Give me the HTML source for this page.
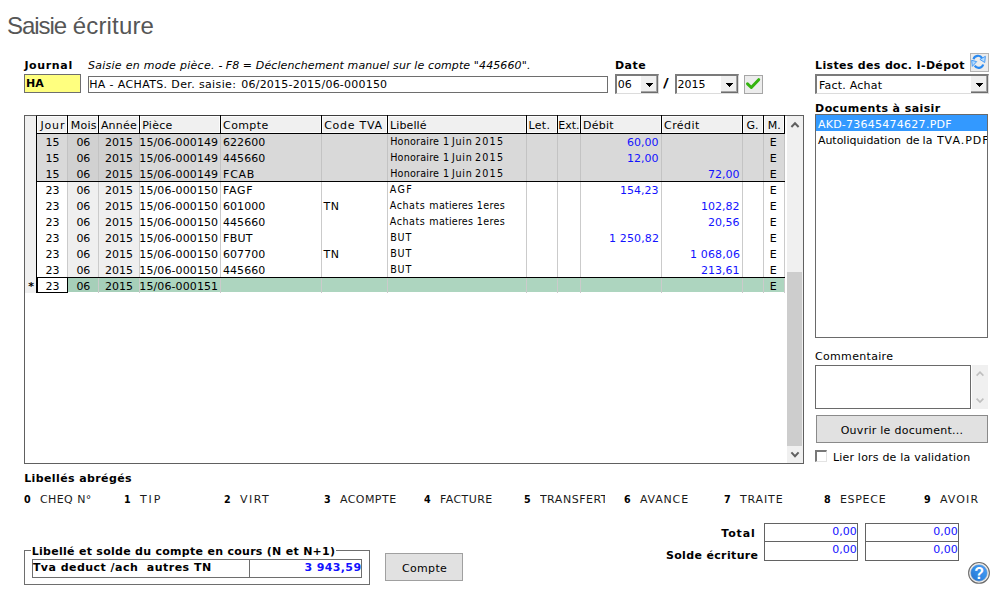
<!DOCTYPE html>
<html lang="fr"><head><meta charset="utf-8"><title>Saisie écriture</title>
<style>
html,body{margin:0;padding:0}
body{width:1000px;height:612px;position:relative;overflow:hidden;background:#fff;font-family:"DejaVu Sans","Liberation Sans",sans-serif;font-size:11px}
body>div,body>svg,body>span{position:absolute;box-sizing:border-box}
.t{white-space:pre;line-height:20px;height:20px}
.b{font-weight:bold}.i{font-style:italic}
.sel{background:#fff;border:solid;border-width:2px 1px 1px 2px;border-color:#7b7b7b #dcdcdc #dcdcdc #7b7b7b}
.sb{position:absolute;right:0;top:0;width:17px;height:17px;box-sizing:border-box;background:#f0f0f0;border:solid #6d6d6d;border-width:0 1px 1px 0;box-shadow:inset -1px -1px 0 #a5a5a5}
.sb svg{position:absolute;left:5px;top:7px}
.ckb{background:#ececec;border:1px solid #a6a6a6}
.ckb svg{position:absolute;left:0;top:0}
</style></head><body>
<div style="left:24px;top:74px;width:57px;height:19px;background:#ffff7f;border:1px solid #6e6e6e"></div>
<div style="left:88px;top:76px;width:520px;height:17px;background:#fff;border:1px solid #6e6e6e"></div>
<div class="sel" style="left:615px;top:74px;width:44px;height:20px"><div class="sb"><svg width="7" height="4" viewBox="0 0 7 4" shape-rendering="crispEdges"><path d="M0 0h7v1h-1v1h-1v1h-1v1h-1v-1h-1v-1h-1v-1h-1z"/></svg></div></div>
<div class="sel" style="left:675px;top:74px;width:64px;height:20px"><div class="sb"><svg width="7" height="4" viewBox="0 0 7 4" shape-rendering="crispEdges"><path d="M0 0h7v1h-1v1h-1v1h-1v1h-1v-1h-1v-1h-1v-1h-1z"/></svg></div></div>
<div class="sel" style="left:815px;top:74px;width:174px;height:20px"><div class="sb"><svg width="7" height="4" viewBox="0 0 7 4" shape-rendering="crispEdges"><path d="M0 0h7v1h-1v1h-1v1h-1v1h-1v-1h-1v-1h-1v-1h-1z"/></svg></div></div>
<div class="ckb" style="left:744px;top:75px;width:19px;height:19px"><svg width="17" height="17" viewBox="0 0 17 17"><path d="M2.5 7.9 L6.3 11.5 L13.7 3.7" fill="none" stroke="#35b410" stroke-width="3" stroke-linecap="round" stroke-linejoin="round"/></svg></div>
<div class="ckb" style="left:970px;top:53px;width:19px;height:19px;border-color:#b4b4b4"><svg width="17" height="17" viewBox="0 0 17 17"><path d="M2.5 5.3 A4.7 4.7 0 0 1 11.1 4.1" fill="none" stroke="#2b8af0" stroke-width="2.2"/><path d="M8.9 5.4 L14.4 2.3 L13.7 8.5 Z" fill="#b4dbff" stroke="#3a94f4" stroke-width="0.9" stroke-linejoin="round"/><path d="M12.2 10.5 A4.7 4.7 0 0 1 3.7 11.7" fill="none" stroke="#2b8af0" stroke-width="2.2"/><path d="M5.7 7.6 L0.6 6.3 L1.3 12.4 Z" fill="#b4dbff" stroke="#3a94f4" stroke-width="0.9" stroke-linejoin="round"/></svg></div>
<div style="left:24px;top:115px;width:780px;height:349px;background:#fff;border:1px solid #606060"></div>
<div style="left:25px;top:116px;width:11px;height:177px;background:#f0f0f0"></div>
<div style="left:37px;top:116px;width:30px;height:17px;background:#f0f0f0;box-shadow:inset 0 0 0 1px #fcfcfc"></div>
<div style="left:68px;top:116px;width:30px;height:17px;background:#f0f0f0;box-shadow:inset 0 0 0 1px #fcfcfc"></div>
<div style="left:99px;top:116px;width:40px;height:17px;background:#f0f0f0;box-shadow:inset 0 0 0 1px #fcfcfc"></div>
<div style="left:140px;top:116px;width:80px;height:17px;background:#f0f0f0;box-shadow:inset 0 0 0 1px #fcfcfc"></div>
<div style="left:221px;top:116px;width:100px;height:17px;background:#f0f0f0;box-shadow:inset 0 0 0 1px #fcfcfc"></div>
<div style="left:322px;top:116px;width:65px;height:17px;background:#f0f0f0;box-shadow:inset 0 0 0 1px #fcfcfc"></div>
<div style="left:388px;top:116px;width:138px;height:17px;background:#f0f0f0;box-shadow:inset 0 0 0 1px #fcfcfc"></div>
<div style="left:527px;top:116px;width:30px;height:17px;background:#f0f0f0;box-shadow:inset 0 0 0 1px #fcfcfc"></div>
<div style="left:558px;top:116px;width:22px;height:17px;background:#f0f0f0;box-shadow:inset 0 0 0 1px #fcfcfc"></div>
<div style="left:581px;top:116px;width:80px;height:17px;background:#f0f0f0;box-shadow:inset 0 0 0 1px #fcfcfc"></div>
<div style="left:662px;top:116px;width:80px;height:17px;background:#f0f0f0;box-shadow:inset 0 0 0 1px #fcfcfc"></div>
<div style="left:743px;top:116px;width:20px;height:17px;background:#f0f0f0;box-shadow:inset 0 0 0 1px #fcfcfc"></div>
<div style="left:764px;top:116px;width:20px;height:17px;background:#f0f0f0;box-shadow:inset 0 0 0 1px #fcfcfc"></div>
<div style="left:37px;top:134px;width:30px;height:47px;background:#d9d9d9"></div>
<div style="left:68px;top:134px;width:71px;height:47px;background:#d1d1d1"></div>
<div style="left:140px;top:134px;width:644px;height:47px;background:#d9d9d9"></div>
<div style="left:37px;top:182px;width:30px;height:95px;background:#fff"></div>
<div style="left:68px;top:182px;width:71px;height:95px;background:#efefef"></div>
<div style="left:140px;top:182px;width:644px;height:95px;background:#fff"></div>
<div style="left:37px;top:278px;width:30px;height:14px;background:#fff"></div>
<div style="left:68px;top:278px;width:71px;height:14px;background:#a6cfb9"></div>
<div style="left:140px;top:278px;width:644px;height:14px;background:#add5bf"></div>
<div style="left:67px;top:134px;width:1px;height:47px;background:#c3c3c3"></div>
<div style="left:67px;top:182px;width:1px;height:111px;background:#cbcbcb"></div>
<div style="left:98px;top:134px;width:1px;height:47px;background:#c3c3c3"></div>
<div style="left:98px;top:182px;width:1px;height:111px;background:#cbcbcb"></div>
<div style="left:139px;top:134px;width:1px;height:47px;background:#c3c3c3"></div>
<div style="left:139px;top:182px;width:1px;height:111px;background:#cbcbcb"></div>
<div style="left:220px;top:134px;width:1px;height:47px;background:#c3c3c3"></div>
<div style="left:220px;top:182px;width:1px;height:111px;background:#cbcbcb"></div>
<div style="left:321px;top:134px;width:1px;height:47px;background:#c3c3c3"></div>
<div style="left:321px;top:182px;width:1px;height:111px;background:#cbcbcb"></div>
<div style="left:387px;top:134px;width:1px;height:47px;background:#c3c3c3"></div>
<div style="left:387px;top:182px;width:1px;height:111px;background:#cbcbcb"></div>
<div style="left:526px;top:134px;width:1px;height:47px;background:#c3c3c3"></div>
<div style="left:526px;top:182px;width:1px;height:111px;background:#cbcbcb"></div>
<div style="left:557px;top:134px;width:1px;height:47px;background:#c3c3c3"></div>
<div style="left:557px;top:182px;width:1px;height:111px;background:#cbcbcb"></div>
<div style="left:580px;top:134px;width:1px;height:47px;background:#c3c3c3"></div>
<div style="left:580px;top:182px;width:1px;height:111px;background:#cbcbcb"></div>
<div style="left:661px;top:134px;width:1px;height:47px;background:#c3c3c3"></div>
<div style="left:661px;top:182px;width:1px;height:111px;background:#cbcbcb"></div>
<div style="left:742px;top:134px;width:1px;height:47px;background:#c3c3c3"></div>
<div style="left:742px;top:182px;width:1px;height:111px;background:#cbcbcb"></div>
<div style="left:763px;top:134px;width:1px;height:47px;background:#c3c3c3"></div>
<div style="left:763px;top:182px;width:1px;height:111px;background:#cbcbcb"></div>
<div style="left:784px;top:134px;width:1px;height:47px;background:#c3c3c3"></div>
<div style="left:784px;top:182px;width:1px;height:111px;background:#cbcbcb"></div>
<div style="left:36px;top:115px;width:1px;height:178px;background:#000"></div>
<div style="left:36px;top:115px;width:749px;height:1px;background:#3c3c3c"></div>
<div style="left:36px;top:133px;width:749px;height:1px;background:#000"></div>
<div style="left:67px;top:115px;width:1px;height:19px;background:#000"></div>
<div style="left:98px;top:115px;width:1px;height:19px;background:#000"></div>
<div style="left:139px;top:115px;width:1px;height:19px;background:#000"></div>
<div style="left:220px;top:115px;width:1px;height:19px;background:#000"></div>
<div style="left:321px;top:115px;width:1px;height:19px;background:#000"></div>
<div style="left:387px;top:115px;width:1px;height:19px;background:#000"></div>
<div style="left:526px;top:115px;width:1px;height:19px;background:#000"></div>
<div style="left:557px;top:115px;width:1px;height:19px;background:#000"></div>
<div style="left:580px;top:115px;width:1px;height:19px;background:#000"></div>
<div style="left:661px;top:115px;width:1px;height:19px;background:#000"></div>
<div style="left:742px;top:115px;width:1px;height:19px;background:#000"></div>
<div style="left:763px;top:115px;width:1px;height:19px;background:#000"></div>
<div style="left:784px;top:115px;width:1px;height:19px;background:#000"></div>
<div style="left:36px;top:181px;width:749px;height:1px;background:#000"></div>
<div style="left:36px;top:277px;width:749px;height:1px;background:#000"></div>
<div style="left:36px;top:277px;width:32px;height:16px;border:1px solid #000;border-left-width:2px;background:#fff"></div>
<div style="left:787px;top:116px;width:16px;height:347px;background:#f0f0f0"></div>
<div style="left:787px;top:272px;width:15px;height:174px;background:#cdcdcd"></div>
<svg style="left:787px;top:116px" width="16" height="17" viewBox="0 0 16 17"><path d="M4.4 11 L8 7.2 L11.6 11" fill="none" stroke="#606060" stroke-width="2"/></svg>
<svg style="left:787px;top:446px" width="16" height="17" viewBox="0 0 16 17"><path d="M4.4 6.4 L8 10.2 L11.6 6.4" fill="none" stroke="#606060" stroke-width="2"/></svg>
<div style="left:815px;top:114px;width:173px;height:224px;background:#fff;border:1px solid #6a6a6a"></div>
<div style="left:816px;top:115px;width:171px;height:16px;background:#3399ff"></div>
<div style="left:815px;top:365px;width:156px;height:44px;background:#fff;border:1px solid #6a6a6a"></div>
<div style="left:972px;top:365px;width:16px;height:44px;background:#f0f0f0"></div>
<svg style="left:972px;top:365px" width="16" height="17" viewBox="0 0 16 17"><path d="M4.6 10.6 L8 7.2 L11.4 10.6" fill="none" stroke="#bfbfbf" stroke-width="1.6"/></svg>
<svg style="left:972px;top:392px" width="16" height="17" viewBox="0 0 16 17"><path d="M4.6 6.6 L8 10 L11.4 6.6" fill="none" stroke="#bfbfbf" stroke-width="1.6"/></svg>
<div style="left:816px;top:415px;width:172px;height:28px;background:#e1e1e1;border:1px solid #8a8a8a"></div>
<div style="left:815px;top:450px;width:12px;height:12px;background:#fff;border:solid;border-width:2px 1px 1px 2px;border-color:#787878 #e3e3e3 #e3e3e3 #787878"></div>
<div style="left:24px;top:550px;width:346px;height:35px;border:1px solid #6e6e6e"></div>
<div style="left:31px;top:544px;width:305px;height:14px;background:#fff"></div>
<div style="left:32px;top:559px;width:218px;height:19px;border:1px solid #6e6e6e;background:#fff"></div>
<div style="left:249px;top:559px;width:113px;height:19px;border:1px solid #6e6e6e;background:#fff"></div>
<div style="left:385px;top:553px;width:78px;height:28px;background:#e1e1e1;border:1px solid #a0a0a0"></div>
<div style="left:764px;top:523px;width:94px;height:19px;border:1px solid #636363;background:#fff"></div>
<div style="left:764px;top:541px;width:94px;height:20px;border:1px solid #636363;background:#fff"></div>
<div style="left:865px;top:523px;width:94px;height:19px;border:1px solid #636363;background:#fff"></div>
<div style="left:865px;top:541px;width:94px;height:20px;border:1px solid #636363;background:#fff"></div>
<svg style="left:967px;top:561px" width="24" height="24" viewBox="0 0 24 24"><defs><linearGradient id="hg" x1="1" y1="0" x2="0" y2="1"><stop offset="0" stop-color="#4ea2f4"/><stop offset="0.55" stop-color="#338ae6"/><stop offset="1" stop-color="#2470c8"/></linearGradient></defs><circle cx="12" cy="11.9" r="10.4" fill="#f0f0f0" stroke="#6c6c6c" stroke-width="1.1"/><circle cx="12" cy="11.9" r="8.5" fill="url(#hg)" stroke="#d9cfc6" stroke-width="0.5"/><text x="12.2" y="17.6" text-anchor="middle" font-family="Liberation Sans,sans-serif" font-weight="bold" font-size="16" fill="#fff">?</text></svg>
<span class="t" style="left:7.10px;top:15.50px;font-size:24px;font-family:'Liberation Sans',sans-serif;color:#565656;letter-spacing:-1.067px">Saisie</span>
<span class="t" style="left:72.70px;top:15.50px;font-size:24px;font-family:'Liberation Sans',sans-serif;color:#565656;letter-spacing:0.173px">écriture</span>
<span class="t b" style="left:24.39px;top:56.00px;letter-spacing:0.645px">Journal</span>
<span class="t i" style="left:87.89px;top:56.00px;letter-spacing:0.285px">Saisie en mode pièce. -</span>
<span class="t i" style="left:225.70px;top:56.00px;letter-spacing:0.117px">F8 = Déclenchement manuel sur le compte "445660".</span>
<span class="t b" style="left:615.00px;top:56.00px;letter-spacing:0.443px">Date</span>
<span class="t b" style="left:815.10px;top:56.00px;letter-spacing:0.335px">Listes des doc. I-Dépot</span>
<span class="t b" style="left:26.00px;top:74.00px">HA</span>
<span class="t" style="left:89.19px;top:75.00px;letter-spacing:0.365px">HA - ACHATS. Der. saisie:</span>
<span class="t" style="left:241.30px;top:75.00px;letter-spacing:0.213px">06/2015-2015/06-000150</span>
<span class="t" style="left:617.79px;top:75.00px">06</span>
<span class="t b" style="left:662.71px;top:73.00px;font-size:12.5px;transform:scaleX(1.25);transform-origin:0 0">/</span>
<span class="t" style="left:677.60px;top:75.00px">2015</span>
<span class="t" style="left:819.00px;top:76.00px;letter-spacing:0.218px">Fact. Achat</span>
<span class="t b" style="left:815.10px;top:99.00px;letter-spacing:0.408px">Documents à saisir</span>
<span class="t" style="left:817.89px;top:115.00px;color:#fff;letter-spacing:0.256px">AKD-73645474627.PDF</span>
<span class="t" style="left:817.89px;top:131.00px;letter-spacing:-0.018px">Autoliquidation</span>
<span class="t" style="left:905.89px;top:131.00px">de</span>
<span class="t" style="left:922.60px;top:131.00px">la</span>
<span class="t" style="left:936.89px;top:131.00px;letter-spacing:0.983px;width:49.7px;overflow:hidden">TVA.PDF</span>
<span class="t" style="left:815.00px;top:347.00px;letter-spacing:0.326px">Commentaire</span>
<span class="t" style="left:840.69px;top:421.00px;letter-spacing:0.268px">Ouvrir le document...</span>
<span class="t" style="left:832.89px;top:448.00px;letter-spacing:0.204px">Lier lors de la validation</span>
<span class="t b" style="left:24.20px;top:469.00px;letter-spacing:0.390px">Libellés abrégés</span>
<span class="t b" style="left:24.20px;top:490.00px;transform:scaleX(.87);transform-origin:0 0">0</span>
<span class="t" style="left:39.90px;top:490.00px;color:#1a1a1a;letter-spacing:0.436px">CHEQ N°</span>
<span class="t b" style="left:124.19px;top:490.00px;transform:scaleX(.87);transform-origin:0 0">1</span>
<span class="t" style="left:139.90px;top:490.00px;color:#1a1a1a;letter-spacing:1.900px">TIP</span>
<span class="t b" style="left:224.20px;top:490.00px;transform:scaleX(.87);transform-origin:0 0">2</span>
<span class="t" style="left:239.90px;top:490.00px;color:#1a1a1a;letter-spacing:1.522px">VIRT</span>
<span class="t b" style="left:324.19px;top:490.00px;transform:scaleX(.87);transform-origin:0 0">3</span>
<span class="t" style="left:339.89px;top:490.00px;color:#1a1a1a;letter-spacing:0.457px">ACOMPTE</span>
<span class="t b" style="left:424.19px;top:490.00px;transform:scaleX(.87);transform-origin:0 0">4</span>
<span class="t" style="left:439.89px;top:490.00px;color:#1a1a1a;letter-spacing:0.451px">FACTURE</span>
<span class="t b" style="left:524.19px;top:490.00px;transform:scaleX(.87);transform-origin:0 0">5</span>
<span class="t" style="left:539.89px;top:490.00px;color:#1a1a1a;letter-spacing:0.526px;width:65.5px;overflow:hidden">TRANSFERT</span>
<span class="t b" style="left:624.19px;top:490.00px;transform:scaleX(.87);transform-origin:0 0">6</span>
<span class="t" style="left:639.89px;top:490.00px;color:#1a1a1a;letter-spacing:0.836px">AVANCE</span>
<span class="t b" style="left:724.19px;top:490.00px;transform:scaleX(.87);transform-origin:0 0">7</span>
<span class="t" style="left:739.89px;top:490.00px;color:#1a1a1a;letter-spacing:0.870px">TRAITE</span>
<span class="t b" style="left:824.19px;top:490.00px;transform:scaleX(.87);transform-origin:0 0">8</span>
<span class="t" style="left:839.89px;top:490.00px;color:#1a1a1a;letter-spacing:0.711px">ESPECE</span>
<span class="t b" style="left:924.19px;top:490.00px;transform:scaleX(.87);transform-origin:0 0">9</span>
<span class="t" style="left:939.89px;top:490.00px;color:#1a1a1a;letter-spacing:1.127px">AVOIR</span>
<span class="t b" style="left:721.19px;top:524.00px;letter-spacing:0.912px">Total</span>
<span class="t b" style="left:665.89px;top:546.00px;letter-spacing:0.356px">Solde écriture</span>
<span class="t" style="left:832.19px;top:522.00px;color:#1212ff">0,00</span>
<span class="t" style="left:832.19px;top:540.00px;color:#1212ff">0,00</span>
<span class="t" style="left:933.19px;top:522.00px;color:#1212ff">0,00</span>
<span class="t" style="left:933.19px;top:540.00px;color:#1212ff">0,00</span>
<span class="t b" style="left:31.69px;top:542.00px;letter-spacing:0.285px">Libellé et solde du compte en cours (N et N+1)</span>
<span class="t b" style="left:32.90px;top:558.00px;letter-spacing:0.468px">Tva deduct /ach  autres TN</span>
<span class="t b" style="left:304.39px;top:558.00px;color:#1212ff;letter-spacing:0.396px">3 943,59</span>
<span class="t" style="left:401.89px;top:559.00px;letter-spacing:0.361px">Compte</span>
<span class="t b" style="left:28.20px;top:277.00px">*</span>
<span class="t" style="left:40.40px;top:116.00px;letter-spacing:0.847px">Jour</span>
<span class="t" style="left:70.69px;top:116.00px;letter-spacing:0.265px">Mois</span>
<span class="t" style="left:100.89px;top:116.00px;letter-spacing:0.199px">Année</span>
<span class="t" style="left:142.20px;top:116.00px;letter-spacing:0.270px">Pièce</span>
<span class="t" style="left:223.09px;top:116.00px;letter-spacing:0.381px">Compte</span>
<span class="t" style="left:324.19px;top:116.00px;letter-spacing:0.739px">Code TVA</span>
<span class="t" style="left:390.09px;top:116.00px;letter-spacing:0.097px">Libellé</span>
<span class="t" style="left:528.60px;top:116.00px;letter-spacing:0.265px">Let.</span>
<span class="t" style="left:558.29px;top:116.00px;letter-spacing:0.010px">Ext.</span>
<span class="t" style="left:583.10px;top:116.00px;letter-spacing:0.229px">Débit</span>
<span class="t" style="left:664.10px;top:116.00px;letter-spacing:0.403px">Crédit</span>
<span class="t" style="left:746.60px;top:116.00px">G.</span>
<span class="t" style="left:767.69px;top:116.00px">M.</span>
<span class="t" style="left:45.40px;top:133.00px">15</span>
<span class="t" style="left:76.39px;top:133.00px">06</span>
<span class="t" style="left:104.99px;top:133.00px">2015</span>
<span class="t" style="left:139.30px;top:133.00px;letter-spacing:0.103px">15/06-000149</span>
<span class="t" style="left:223.09px;top:133.00px;letter-spacing:0.022px">622600</span>
<span class="t" style="left:390.17px;top:132.00px;font-size:9.6px;letter-spacing:0.211px">Honoraire</span>
<span class="t" style="left:442.97px;top:132.00px;font-size:9.6px">1</span>
<span class="t" style="left:452.07px;top:132.00px;font-size:9.6px;letter-spacing:0.667px">Juin</span>
<span class="t" style="left:474.97px;top:132.00px;font-size:9.6px;letter-spacing:1.211px">2015</span>
<span class="t" style="left:627.09px;top:133.00px;color:#1212ff">60,00</span>
<span class="t" style="left:769.69px;top:133.00px">E</span>
<span class="t" style="left:45.40px;top:149.00px">15</span>
<span class="t" style="left:76.39px;top:149.00px">06</span>
<span class="t" style="left:104.99px;top:149.00px">2015</span>
<span class="t" style="left:139.30px;top:149.00px;letter-spacing:0.103px">15/06-000149</span>
<span class="t" style="left:223.09px;top:149.00px;letter-spacing:0.022px">445660</span>
<span class="t" style="left:390.17px;top:148.00px;font-size:9.6px;letter-spacing:0.211px">Honoraire</span>
<span class="t" style="left:442.97px;top:148.00px;font-size:9.6px">1</span>
<span class="t" style="left:452.07px;top:148.00px;font-size:9.6px;letter-spacing:0.667px">Juin</span>
<span class="t" style="left:474.97px;top:148.00px;font-size:9.6px;letter-spacing:1.211px">2015</span>
<span class="t" style="left:627.09px;top:149.00px;color:#1212ff">12,00</span>
<span class="t" style="left:769.69px;top:149.00px">E</span>
<span class="t" style="left:45.40px;top:165.00px">15</span>
<span class="t" style="left:76.39px;top:165.00px">06</span>
<span class="t" style="left:104.99px;top:165.00px">2015</span>
<span class="t" style="left:139.30px;top:165.00px;letter-spacing:0.103px">15/06-000149</span>
<span class="t" style="left:223.09px;top:165.00px;letter-spacing:0.739px">FCAB</span>
<span class="t" style="left:390.17px;top:164.00px;font-size:9.6px;letter-spacing:0.211px">Honoraire</span>
<span class="t" style="left:442.97px;top:164.00px;font-size:9.6px">1</span>
<span class="t" style="left:452.07px;top:164.00px;font-size:9.6px;letter-spacing:0.667px">Juin</span>
<span class="t" style="left:474.97px;top:164.00px;font-size:9.6px;letter-spacing:1.211px">2015</span>
<span class="t" style="left:708.09px;top:165.00px;color:#1212ff">72,00</span>
<span class="t" style="left:769.69px;top:165.00px">E</span>
<span class="t" style="left:45.40px;top:181.00px">23</span>
<span class="t" style="left:76.39px;top:181.00px">06</span>
<span class="t" style="left:104.99px;top:181.00px">2015</span>
<span class="t" style="left:139.30px;top:181.00px;letter-spacing:0.103px">15/06-000150</span>
<span class="t" style="left:223.09px;top:181.00px;letter-spacing:0.637px">FAGF</span>
<span class="t" style="left:389.77px;top:180.00px;font-size:9.6px;letter-spacing:1.348px">AGF</span>
<span class="t" style="left:620.09px;top:181.00px;color:#1212ff">154,23</span>
<span class="t" style="left:769.69px;top:181.00px">E</span>
<span class="t" style="left:45.40px;top:197.00px">23</span>
<span class="t" style="left:76.39px;top:197.00px">06</span>
<span class="t" style="left:104.99px;top:197.00px">2015</span>
<span class="t" style="left:139.30px;top:197.00px;letter-spacing:0.103px">15/06-000150</span>
<span class="t" style="left:223.09px;top:197.00px;letter-spacing:0.022px">601000</span>
<span class="t" style="left:323.59px;top:197.00px;letter-spacing:0.357px">TN</span>
<span class="t" style="left:389.87px;top:196.00px;font-size:9.6px;letter-spacing:0.493px">Achats</span>
<span class="t" style="left:429.37px;top:196.00px;font-size:9.6px;letter-spacing:0.193px">matieres</span>
<span class="t" style="left:476.77px;top:196.00px;font-size:9.6px;letter-spacing:0.354px">1eres</span>
<span class="t" style="left:701.09px;top:197.00px;color:#1212ff">102,82</span>
<span class="t" style="left:769.69px;top:197.00px">E</span>
<span class="t" style="left:45.40px;top:213.00px">23</span>
<span class="t" style="left:76.39px;top:213.00px">06</span>
<span class="t" style="left:104.99px;top:213.00px">2015</span>
<span class="t" style="left:139.30px;top:213.00px;letter-spacing:0.103px">15/06-000150</span>
<span class="t" style="left:223.09px;top:213.00px;letter-spacing:0.022px">445660</span>
<span class="t" style="left:389.87px;top:212.00px;font-size:9.6px;letter-spacing:0.493px">Achats</span>
<span class="t" style="left:429.37px;top:212.00px;font-size:9.6px;letter-spacing:0.193px">matieres</span>
<span class="t" style="left:476.77px;top:212.00px;font-size:9.6px;letter-spacing:0.354px">1eres</span>
<span class="t" style="left:708.09px;top:213.00px;color:#1212ff">20,56</span>
<span class="t" style="left:769.69px;top:213.00px">E</span>
<span class="t" style="left:45.40px;top:229.00px">23</span>
<span class="t" style="left:76.39px;top:229.00px">06</span>
<span class="t" style="left:104.99px;top:229.00px">2015</span>
<span class="t" style="left:139.30px;top:229.00px;letter-spacing:0.103px">15/06-000150</span>
<span class="t" style="left:223.09px;top:229.00px;letter-spacing:0.251px">FBUT</span>
<span class="t" style="left:390.17px;top:228.00px;font-size:9.6px;letter-spacing:0.844px">BUT</span>
<span class="t" style="left:609.09px;top:229.00px;color:#1212ff;letter-spacing:0.132px">1 250,82</span>
<span class="t" style="left:769.69px;top:229.00px">E</span>
<span class="t" style="left:45.40px;top:245.00px">23</span>
<span class="t" style="left:76.39px;top:245.00px">06</span>
<span class="t" style="left:104.99px;top:245.00px">2015</span>
<span class="t" style="left:139.30px;top:245.00px;letter-spacing:0.103px">15/06-000150</span>
<span class="t" style="left:223.09px;top:245.00px;letter-spacing:0.022px">607700</span>
<span class="t" style="left:323.59px;top:245.00px;letter-spacing:0.357px">TN</span>
<span class="t" style="left:390.17px;top:244.00px;font-size:9.6px;letter-spacing:0.844px">BUT</span>
<span class="t" style="left:690.09px;top:245.00px;color:#1212ff;letter-spacing:0.132px">1 068,06</span>
<span class="t" style="left:769.69px;top:245.00px">E</span>
<span class="t" style="left:45.40px;top:261.00px">23</span>
<span class="t" style="left:76.39px;top:261.00px">06</span>
<span class="t" style="left:104.99px;top:261.00px">2015</span>
<span class="t" style="left:139.30px;top:261.00px;letter-spacing:0.103px">15/06-000150</span>
<span class="t" style="left:223.09px;top:261.00px;letter-spacing:0.022px">445660</span>
<span class="t" style="left:390.17px;top:260.00px;font-size:9.6px;letter-spacing:0.844px">BUT</span>
<span class="t" style="left:701.09px;top:261.00px;color:#1212ff">213,61</span>
<span class="t" style="left:769.69px;top:261.00px">E</span>
<span class="t" style="left:45.40px;top:277.00px">23</span>
<span class="t" style="left:76.39px;top:277.00px">06</span>
<span class="t" style="left:104.99px;top:277.00px">2015</span>
<span class="t" style="left:139.30px;top:277.00px;letter-spacing:0.103px">15/06-000151</span>
<span class="t" style="left:769.69px;top:277.00px">E</span>
</body></html>
